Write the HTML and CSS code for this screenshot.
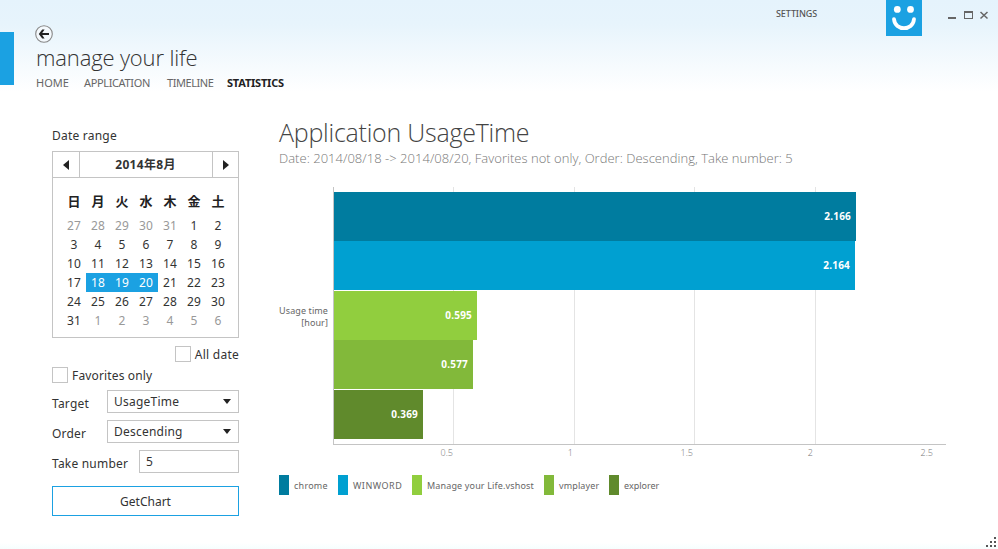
FILE: index.html
```html
<!DOCTYPE html>
<html lang="en">
<head>
<meta charset="utf-8">
<title>manage your life</title>
<link rel="stylesheet" href="styles.css">
</head>
<body>
<div class="window">
  <header class="header">
    <div class="accent"></div>
    <div class="brand">
      <svg class="back" width="18" height="18" viewBox="0 0 18 18"><circle cx="9" cy="9" r="8.3" fill="#f4f9fd" stroke="#888" stroke-width="1.1"/><path d="M9.6 4.6H7.2L3.8 9l3.4 4.4h2.4L7.2 10H14V8H7.2z" fill="#222"/></svg>
      <h1 class="title">manage your life</h1>
      <nav class="nav"><a class="n1">HOME</a><a class="n2">APPLICATION</a><a class="n3">TIMELINE</a><a class="n4 active">STATISTICS</a></nav>
    </div>
    <span class="settings">SETTINGS</span>
    <svg class="logo" width="36" height="36" viewBox="0 0 36 36"><path fill="#1ba1e2" d="M0 0h36v36H0z"/><circle cx="11.3" cy="9.4" r="3.4" fill="#fff"/><circle cx="24.5" cy="9.4" r="3.4" fill="#fff"/><path d="M8 19.2c1 12 19 12 20 0" fill="none" stroke="#fff" stroke-width="3.8" stroke-linecap="round"/></svg>
    <svg class="controls" width="44" height="12" viewBox="0 0 44 12"><path d="M1 7h8v2H1z" fill="#666"/><path d="M17 1h9v8h-9zM18 3v5h7V3z" fill="#666" fill-rule="evenodd"/><path d="M33.5 2l7 6.5m0-6.5l-7 6.5" stroke="#666" stroke-width="1.5"/></svg>
  </header>
  <main class="main">
    <section class="sidebar">
      <div class="label range">Date range</div>
      <div class="calendar">
        <div class="cal-head">
          <span class="arrow"><svg width="6" height="10" viewBox="0 0 6 10"><path d="M6 0v10L0 5z" fill="#222"/></svg></span>
          <b class="month">2014年8月</b>
          <span class="arrow next"><svg width="6" height="10" viewBox="0 0 6 10"><path d="M0 0v10l6-5z" fill="#222"/></svg></span>
        </div>
        <div class="weekdays"><b>日</b><b>月</b><b>火</b><b>水</b><b>木</b><b>金</b><b>土</b></div>
        <div class="days">
          <i>27</i><i>28</i><i>29</i><i>30</i><i>31</i><span>1</span><span>2</span>
          <span>3</span><span>4</span><span>5</span><span>6</span><span>7</span><span>8</span><span>9</span>
          <span>10</span><span>11</span><span>12</span><span>13</span><span>14</span><span>15</span><span>16</span>
          <span>17</span><span class="on">18</span><span class="on">19</span><span class="on">20</span><span>21</span><span>22</span><span>23</span>
          <span>24</span><span>25</span><span>26</span><span>27</span><span>28</span><span>29</span><span>30</span>
          <span>31</span><i>1</i><i>2</i><i>3</i><i>4</i><i>5</i><i>6</i>
        </div>
      </div>
      <div class="check right"><span class="box"></span><span>All date</span></div>
      <div class="check"><span class="box"></span><span>Favorites only</span></div>
      <div class="row first"><span>Target</span><div class="field select"><span>UsageTime</span><svg width="8" height="5" viewBox="0 0 8 5"><path d="M0 0h8L4 5z" fill="#222"/></svg></div></div>
      <div class="row"><span>Order</span><div class="field select"><span>Descending</span><svg width="8" height="5" viewBox="0 0 8 5"><path d="M0 0h8L4 5z" fill="#222"/></svg></div></div>
      <div class="row"><span>Take number</span><div class="field input">5</div></div>
      <div class="button">GetChart</div>
    </section>
    <section class="chart">
      <h2 class="chart-title">Application UsageTime</h2>
      <p class="subtitle">Date: 2014/08/18 -&gt; 2014/08/20, Favorites not only, Order: Descending, Take number: 5</p>
      <div class="plot-row">
        <div class="axis-label">Usage time<br>[hour]</div>
        <div class="plot">
          <div class="bar c1" style="width:522px">2.166</div>
          <div class="bar c2" style="width:521px">2.164</div>
          <div class="bar c3 gap" style="width:143px">0.595</div>
          <div class="bar c4" style="width:139px">0.577</div>
          <div class="bar c5 gap" style="width:89px">0.369</div>
        </div>
      </div>
      <div class="ticks"><span>0.5</span><span>1</span><span>1.5</span><span>2</span><span>2.5</span></div>
      <div class="legend">
        <div class="l1"><i class="c1"></i><span>chrome</span></div><div class="l2"><i class="c2"></i><span>WINWORD</span></div><div class="l3"><i class="c3"></i><span>Manage your Life.vshost</span></div><div class="l4"><i class="c4"></i><span>vmplayer</span></div><div class="l5"><i class="c5"></i><span>explorer</span></div>
      </div>
    </section>
  </main>
  <svg class="grip" width="11" height="11" viewBox="0 0 11 11" fill="#555"><path d="M8 0h2v2H8zM4 4h2v2H4zM8 4h2v2H8zM0 8h2v2H0zM4 8h2v2H4zM8 8h2v2H8z"/></svg>
</div>
</body>
</html>
```
FILE: styles.css
```css
* { box-sizing: border-box; }
body { margin: 0; font-family: "Noto Sans", "Open Sans", "Noto Sans CJK JP", sans-serif; font-size: 12px; color: #333; }
.window { position: relative; width: 998px; height: 549px; overflow: hidden; background: linear-gradient(#e5f3fc 0, #e7f4fc 24px, #fff 92px, #fff 543px, #f6fefe 549px); }
h1, h2, p { margin: 0; font-weight: 300; white-space: nowrap; font-family: "Open Sans", sans-serif; }
.header { display: flex; align-items: flex-start; height: 100px; }
.accent { width: 14px; height: 53px; margin-top: 32px; background: #1ba1e2; }
.brand { width: 762px; padding: 25px 0 0 22px; }
.back { display: block; margin-left: -1px; }
.title { font-size: 22px; line-height: 28px; color: #333; letter-spacing: -0.15px; }
.nav { display: flex; margin-top: 3px; font-size: 11px; line-height: 18px; color: #666; }
.nav a { white-space: nowrap; }
.n1 { width: 48px; }
.n2 { width: 83px; letter-spacing: -0.36px; }
.n3 { width: 60px; letter-spacing: -0.45px; }
.active { font-weight: 700; color: #222; letter-spacing: -0.2px; }
.settings { width: 110px; padding-top: 7px; font-size: 9px; line-height: 14px; font-weight: 500; color: #555; letter-spacing: -0.1px; }
.controls { margin: 10px 0 0 25px; }
.main { display: flex; padding-left: 52px; }
.sidebar { width: 187px; padding-top: 26px; letter-spacing: 0.22px; }
.label { line-height: 19px; }
.calendar { height: 187px; margin-top: 6px; border: 1px solid #c4c4c4; background: #fff; }
.cal-head { display: flex; height: 26px; border-bottom: 1px solid #c4c4c4; }
.arrow { display: flex; width: 26px; align-items: center; justify-content: center; }
.next { width: 25px; }
.month { flex: 1; border: solid #c4c4c4; border-width: 0 1px; text-align: center; line-height: 26px; letter-spacing: 0.3px; padding-right: 1px; }
.weekdays, .days { display: grid; grid-template-columns: repeat(7, 24px); margin-left: 9px; text-align: center; line-height: 19px; }
.weekdays { margin-top: 14px; height: 24px; font-size: 13px; color: #222; }
.days { grid-auto-rows: 19px; font-size: 12px; }
.days i { font-style: normal; color: #999; }
.on { background: #1ba1e2; color: #fff; }
.check { display: flex; height: 16px; gap: 4px; margin-top: 5px; line-height: 17px; letter-spacing: 0.15px; }
.right { justify-content: flex-end; margin-top: 8px; letter-spacing: 0.25px; }
.box { width: 16px; height: 16px; border: 1px solid #c4c4c4; background: #fff; }
.row { display: flex; justify-content: space-between; height: 23px; margin-top: 7px; line-height: 27px; }
.row > span { letter-spacing: 0.2px; }
.field { display: flex; align-items: center; justify-content: space-between; width: 132px; height: 23px; padding: 0 7px 0 6px; border: 1px solid #c4c4c4; background: #fff; line-height: 22px; }
.input { width: 100px; }
.button { height: 30px; margin-top: 13px; border: 1px solid #1ba1e2; background: #fff; text-align: center; line-height: 29px; letter-spacing: 0; }
.chart { margin-left: 40px; padding-top: 14px; }
.chart-title { font-size: 25px; line-height: 36px; color: #444; letter-spacing: -0.24px; }
.subtitle { font-size: 13px; line-height: 17px; color: #777; letter-spacing: 0.025px; }
.plot-row { display: flex; margin-top: 20px; }
.axis-label { width: 49px; margin: 118px 5px 0 0; text-align: right; font-size: 9px; line-height: 12px; color: #666; white-space: nowrap; letter-spacing: 0.1px; }
.plot { width: 613px; height: 258px; padding-top: 5px; border: solid #c4c4c4; border-width: 0 0 1px 1px; background: linear-gradient(#e4e4e4, #e4e4e4) 119px 0 / 1px 100% no-repeat, linear-gradient(#e4e4e4, #e4e4e4) 240px 0 / 1px 100% no-repeat, linear-gradient(#e4e4e4, #e4e4e4) 360px 0 / 1px 100% no-repeat, linear-gradient(#e4e4e4, #e4e4e4) 481px 0 / 1px 100% no-repeat; }
.bar { height: 49px; padding-right: 5px; text-align: right; font-size: 10px; font-weight: 700; line-height: 49px; color: #fff; letter-spacing: 0.2px; }
.gap { margin-top: 1px; }
.c1 { background: #007c9f; }
.c2 { background: #00a0d1; }
.c3 { background: #91ce3e; }
.c4 { background: #82b93a; }
.c5 { background: #608a2c; }
.ticks { display: grid; grid-template-columns: 174px repeat(4, 120px); text-align: right; font-size: 9px; line-height: 16px; color: #777; font-family: "Open Sans", sans-serif; font-weight: 300; }
.legend { display: flex; margin-top: 14px; font-size: 9px; line-height: 21px; color: #666; }
.legend div { display: flex; gap: 5px; white-space: nowrap; }
.legend i { width: 10px; height: 20px; }
.l1 { width: 59px; letter-spacing: 0.25px; }
.l2 { width: 74px; letter-spacing: 0.5px; }
.l3 { width: 132px; letter-spacing: 0.15px; }
.l4 { width: 65px; letter-spacing: 0.13px; }
.grip { position: absolute; right: 1px; bottom: 1px; }
```
